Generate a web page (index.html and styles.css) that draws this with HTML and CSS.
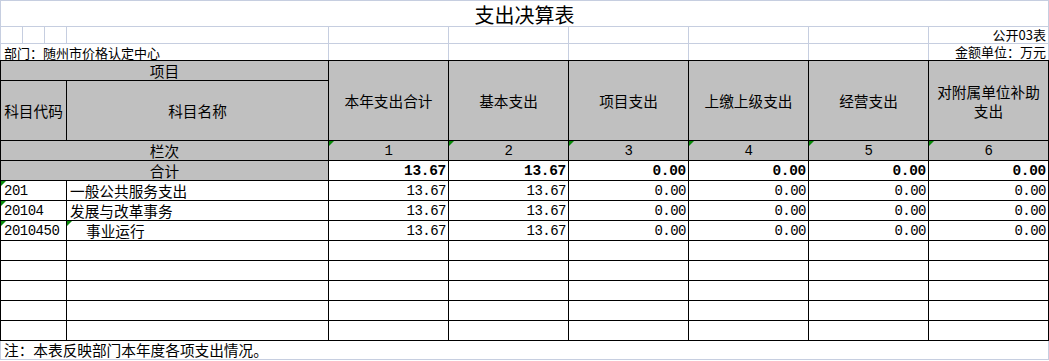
FILE: index.html
```html
<!DOCTYPE html>
<html lang="zh">
<head>
<meta charset="utf-8">
<title>支出决算表</title>
<link rel="stylesheet" href="styles.css">
</head>
<body>
<div class="sheet">
  <div class="title">支出决算表</div>
  <div class="toprow r2">
    <div class="gc"></div><div class="gc"></div><div class="gc"></div><div class="gc"></div>
    <div class="gc"></div><div class="gc"></div><div class="gc"></div><div class="gc"></div><div class="gc"></div>
    <div class="gc right">公开03表</div>
  </div>
  <div class="toprow r3">
    <div class="gc dept">部门：随州市价格认定中心</div>
    <div class="gc"></div><div class="gc"></div><div class="gc"></div><div class="gc"></div><div class="gc"></div>
    <div class="gc right">金额单位：万元</div>
  </div>
  <div class="tbl">
    <div class="c g hd span2">项目</div>
    <div class="c g hd tall">本年支出合计</div>
    <div class="c g hd tall">基本支出</div>
    <div class="c g hd tall">项目支出</div>
    <div class="c g hd tall">上缴上级支出</div>
    <div class="c g hd tall">经营支出</div>
    <div class="c g hd tall two">对附属单位补助<br>支出</div>
    <div class="c g hd">科目代码</div>
    <div class="c g hd">科目名称</div>

    <div class="c g hd span2">栏次</div>
    <div class="c g num-h t">1</div>
    <div class="c g num-h t">2</div>
    <div class="c g num-h t">3</div>
    <div class="c g num-h t">4</div>
    <div class="c g num-h t">5</div>
    <div class="c g num-h t">6</div>

    <div class="c g hd span2">合计</div>
    <div class="c n b">13.67</div>
    <div class="c n b">13.67</div>
    <div class="c n b">0.00</div>
    <div class="c n b">0.00</div>
    <div class="c n b">0.00</div>
    <div class="c n b">0.00</div>

    <div class="c code t">201</div>
    <div class="c name">一般公共服务支出</div>
    <div class="c n">13.67</div>
    <div class="c n">13.67</div>
    <div class="c n">0.00</div>
    <div class="c n">0.00</div>
    <div class="c n">0.00</div>
    <div class="c n">0.00</div>

    <div class="c code t">20104</div>
    <div class="c name">发展与改革事务</div>
    <div class="c n">13.67</div>
    <div class="c n">13.67</div>
    <div class="c n">0.00</div>
    <div class="c n">0.00</div>
    <div class="c n">0.00</div>
    <div class="c n">0.00</div>

    <div class="c code t">2010450</div>
    <div class="c name indent t">事业运行</div>
    <div class="c n">13.67</div>
    <div class="c n">13.67</div>
    <div class="c n">0.00</div>
    <div class="c n">0.00</div>
    <div class="c n">0.00</div>
    <div class="c n">0.00</div>

    <div class="c"></div><div class="c"></div><div class="c"></div><div class="c"></div><div class="c"></div><div class="c"></div><div class="c"></div><div class="c"></div>
    <div class="c"></div><div class="c"></div><div class="c"></div><div class="c"></div><div class="c"></div><div class="c"></div><div class="c"></div><div class="c"></div>
    <div class="c"></div><div class="c"></div><div class="c"></div><div class="c"></div><div class="c"></div><div class="c"></div><div class="c"></div><div class="c"></div>
    <div class="c"></div><div class="c"></div><div class="c"></div><div class="c"></div><div class="c"></div><div class="c"></div><div class="c"></div><div class="c"></div>
    <div class="c"></div><div class="c"></div><div class="c"></div><div class="c"></div><div class="c"></div><div class="c"></div><div class="c"></div><div class="c"></div>
  </div>
  <div class="foot">注：本表反映部门本年度各项支出情况。</div>
</div>
</body>
</html>
```

FILE: styles.css
```css
* { box-sizing: border-box; }
body {
  margin: 0;
  background: #fff;
  color: #000;
  font-family: "Noto Sans CJK SC", "Noto Sans", sans-serif;
}
.sheet { width: 1049px; }

.title {
  height: 27px;
  border: 1px solid #c6cee0;
  text-align: center;
  font-size: 20px;
  line-height: 26px;
  padding-top: 1px;
}

.toprow {
  display: grid;
  grid-template-columns: 22px 22px 22px 262px repeat(6, 120px);
  border-left: 1px solid #c6cee0;
}
.r2 { height: 17px; }
.r3 { height: 16px; }
.gc {
  border-right: 1px solid #c6cee0;
  font-size: 13px;
  line-height: 16px;
  white-space: nowrap;
  overflow: visible;
}
.r2 .gc { border-bottom: 1px solid #c6cee0; height: 17px; }
.r3 .gc { height: 16px; line-height: 15px; }
.right { text-align: right; padding-right: 2px; }
.dept { grid-column: span 4; padding-left: 3px; line-height: 17px !important; }

.tbl {
  display: grid;
  grid-template-columns: 66px 262px repeat(6, 120px);
  grid-template-rows: 20px 60px repeat(10, 20px);
  border-left: 1px solid #000;
  border-top: 1px solid #000;
}
.c {
  position: relative;
  border-right: 1px solid #000;
  border-bottom: 1px solid #000;
  font-size: 14.67px;
  line-height: 19px;
  white-space: nowrap;
}
.g { background: #c0c0c0; }
.hd {
  display: flex;
  align-items: center;
  justify-content: center;
  text-align: center;
}
.span2 { grid-column: span 2; }
.tall { grid-row: span 2; }
.two { line-height: 19px; white-space: normal; padding-top: 1px; }

.num-h {
  text-align: center;
  font-family: "Liberation Mono", monospace;
  font-size: 14px;
  letter-spacing: -0.5px;
  line-height: 21px;
}
.n {
  text-align: right;
  padding-right: 2px;
  font-family: "Liberation Mono", monospace;
  font-size: 14px;
  letter-spacing: -0.5px;
  line-height: 21px;
}
.n.b { font-weight: bold; font-size: 14.5px; letter-spacing: -0.3px; }
.code {
  padding-left: 3px;
  font-family: "Liberation Mono", monospace;
  font-size: 14px;
  letter-spacing: -0.5px;
  line-height: 21px;
}
.name { padding-left: 3px; }
.indent { padding-left: 19px; }

.t::before {
  content: "";
  position: absolute;
  top: 0;
  left: 0;
  width: 0;
  height: 0;
  border-top: 5px solid #0a8a0a;
  border-right: 5px solid transparent;
}

.foot {
  height: 19px;
  border-left: 1px solid #c6cee0;
  border-right: 1px solid #c6cee0;
  border-bottom: 1px solid #c6cee0;
  font-size: 14.67px;
  line-height: 18px;
  padding-left: 3px;
  white-space: nowrap;
}
```
